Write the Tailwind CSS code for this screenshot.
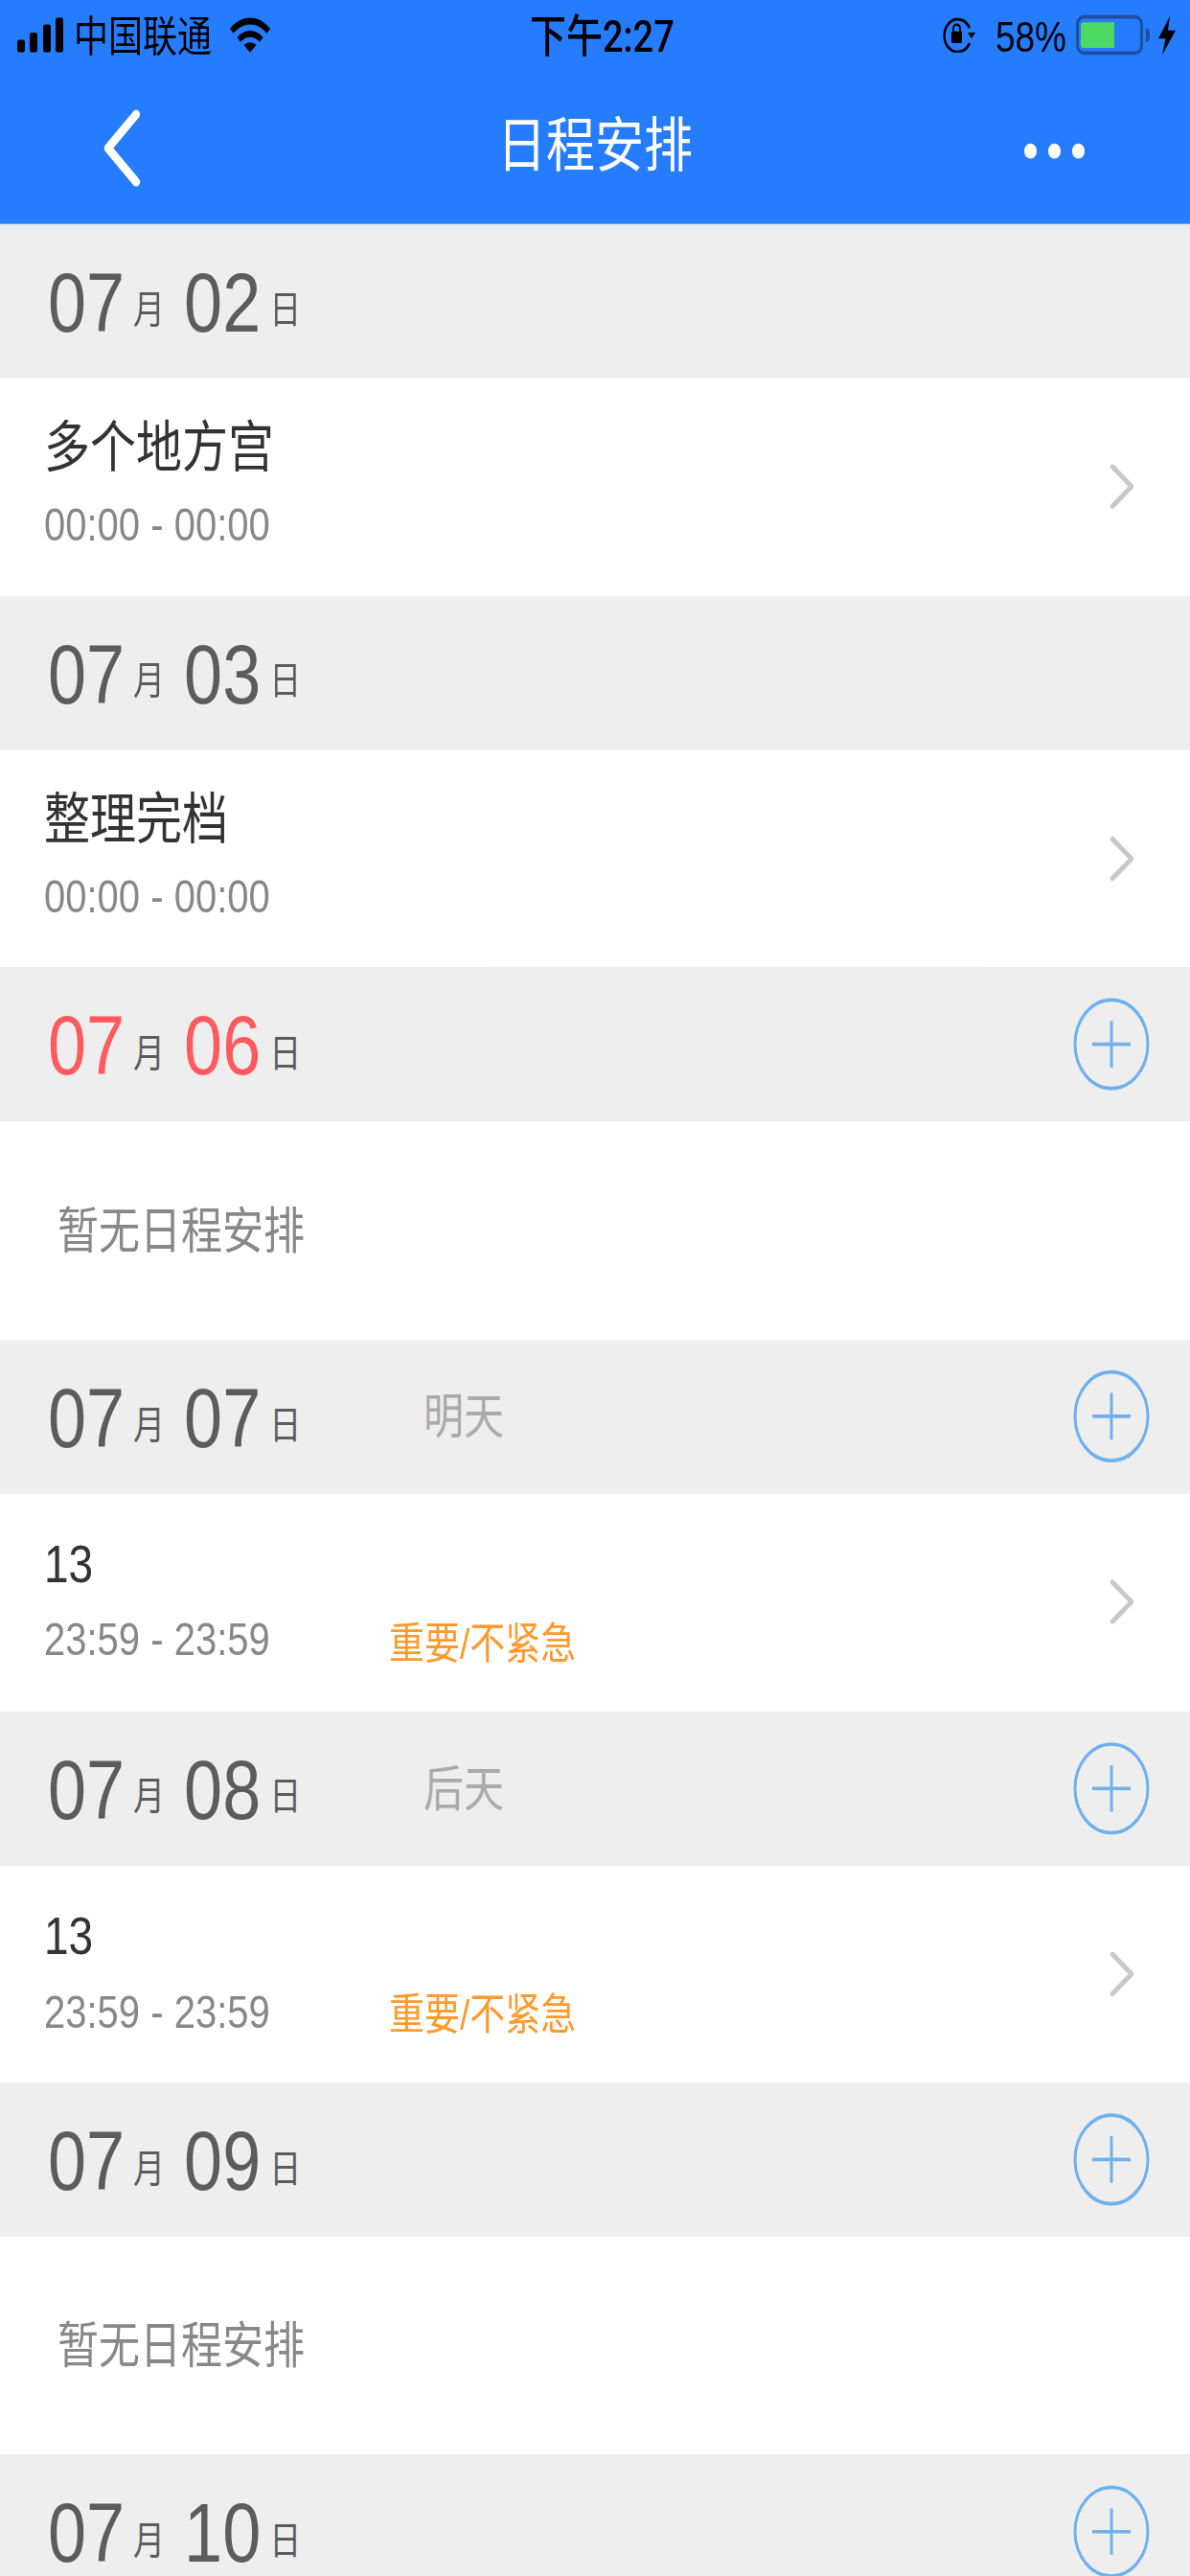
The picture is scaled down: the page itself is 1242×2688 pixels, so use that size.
<!DOCTYPE html>
<html lang="zh-CN">

<head>
  <meta charset="UTF-8">
  <meta name="viewport" content="width=device-width, initial-scale=1.0">
  <script src="https://cdn.jsdelivr.net/npm/@tailwindcss/browser@4"></script>
  <title>日程安排</title>
</head>

<body class="m-0 h-[2688px] w-[1242px] overflow-hidden bg-white">
  <!-- the screenshot is stretched vertically from 1242x2208, so lay out at that size and scale -->
  <div class="h-[2208px] w-[1242px] origin-top scale-y-[1.2174] font-['Liberation_Sans','Noto_Sans_CJK_SC',sans-serif]">

    <header class="h-[192px] bg-[#267cff] border-b border-[#1a86ff]">
      <!-- status bar -->
      <div class="relative flex h-[60px] items-center text-black">
        <svg class="ml-[18px] w-[48px] h-[30px]" viewBox="0 0 48 30" fill="#000">
          <rect x="0" y="19" width="8" height="11" rx="2.5" />
          <rect x="13" y="13" width="8" height="17" rx="2.5" />
          <rect x="27" y="6" width="8" height="24" rx="2.5" />
          <rect x="40" y="0" width="8" height="30" rx="2.5" />
        </svg>
        <span class="ml-[11px] mt-[3px] text-[36px] leading-none">中国联通</span>
        <svg class="ml-[19px] w-[42px] h-[30px]" viewBox="0 0 42 30" fill="#000">
          <path d="M0 9.5 C12 -3 30 -3 42 9.5 L38.5 13.5 C28 3.5 14 3.5 3.5 13.5 Z" />
          <path d="M7.5 17 C15 9.5 27 9.5 34.5 17 L31 21 C25 15.5 17 15.5 11 21 Z" />
          <path d="M14.5 23.5 C18.5 20.500 23.500 20.500 27.500 23.5 L21 30 Z" />
        </svg>
        <span class="absolute left-[553px] top-[12px] font-['Roboto','Noto_Sans_CJK_SC',sans-serif] text-[38px] leading-none font-medium">下午2:27</span>
        <div class="ml-auto flex items-center">
          <svg class="w-[34px] h-[30px]" viewBox="0 0 34 30" fill="none">
            <path d="M28 22 A14 14 0 1 1 28 9" stroke="#000" stroke-width="2.500" />
            <path d="M26 13 L34 13 L30 18 Z" fill="#000" />
            <rect x="9" y="12" width="11" height="10" rx="1" fill="#000" />
            <path d="M11 12 V9.500 A3.500 3.500 0 0 1 18 9.500 V12" stroke="#000" stroke-width="2" />
          </svg>
          <span class="ml-[21px] mt-[3px] text-[37px] leading-none">58%</span>
          <div class="ml-[10px] flex h-[34px] w-[70px] items-center rounded-[8px] border-[3px] border-[#1d4f9f] pl-[2px]">
            <div class="h-[22px] w-[35px] rounded-l-[3px] bg-[#4cd964]"></div>
          </div>
          <div class="ml-[3px] h-[12px] w-[4px] rounded-r-full bg-[#1d4f9f]"></div>
          <svg class="ml-[9px] mr-[15px] w-[18px] h-[33px]" viewBox="0 0 18 33" fill="#000">
            <path d="M12 0 L0 19 L7.500 19 L4 33 L18 12 L10 12 Z" />
          </svg>
        </div>
      </div>

      <!-- nav bar -->
      <div class="relative flex h-[131px] items-center justify-center">
        <svg class="absolute left-[106px] top-[34px] w-[42px] h-[66px]" viewBox="0 0 42 66" fill="none">
          <path d="M37 4 L6 33 L37 62" stroke="#fff" stroke-width="8" stroke-linecap="round" stroke-linejoin="round" transform="translate(1 0) scale(0.95 1)" />
        </svg>
        <h1 class="text-[51px] leading-none text-white">日程安排</h1>
        <div class="absolute left-[1069px] top-[63px] flex gap-[12px]">
          <span class="h-[13px] w-[13px] rounded-full bg-white"></span>
          <span class="h-[13px] w-[13px] rounded-full bg-white"></span>
          <span class="h-[13px] w-[13px] rounded-full bg-white"></span>
        </div>
      </div>
    </header>

    <main>
      <!-- 07/02 -->
      <section class="flex h-[132px] items-center bg-[#eeeeee] pl-[50px] pt-[2px] text-[#5c5c5c]">
        <span class="text-[72px] leading-none">07</span><span class="ml-[9px] mt-[12px] text-[33px] leading-none">月</span>
        <span class="ml-[20px] text-[72px] leading-none">02</span><span class="ml-[9px] mt-[12px] text-[33px] leading-none">日</span>
      </section>
      <article class="relative h-[186.700px] pl-[46px] pt-[30px]">
        <h2 class="text-[48px] leading-[60px] text-[#333]">多个地方宫</h2>
        <p class="mt-[11px] text-[40px] leading-[48px] text-[#888]">00:00 - 00:00</p>
        <svg class="absolute left-[1158px] top-[74px] w-[26px] h-[38px]" viewBox="0 0 26 38" fill="none">
          <path d="M3 2 L23 19 L3 36" stroke="#c8c8c8" stroke-width="4.500" stroke-linecap="round" stroke-linejoin="round" />
        </svg>
      </article>

      <!-- 07/03 -->
      <section class="flex h-[132px] items-center bg-[#eeeeee] pl-[50px] pt-[2px] text-[#5c5c5c]">
        <span class="text-[72px] leading-none">07</span><span class="ml-[9px] mt-[12px] text-[33px] leading-none">月</span>
        <span class="ml-[20px] text-[72px] leading-none">03</span><span class="ml-[9px] mt-[12px] text-[33px] leading-none">日</span>
      </section>
      <article class="relative h-[186.700px] pl-[46px] pt-[30px]">
        <h2 class="text-[48px] leading-[60px] text-[#333]">整理完档</h2>
        <p class="mt-[11px] text-[40px] leading-[48px] text-[#888]">00:00 - 00:00</p>
        <svg class="absolute left-[1158px] top-[74px] w-[26px] h-[38px]" viewBox="0 0 26 38" fill="none">
          <path d="M3 2 L23 19 L3 36" stroke="#c8c8c8" stroke-width="4.500" stroke-linecap="round" stroke-linejoin="round" />
        </svg>
      </article>

      <!-- 07/06 today -->
      <section class="relative flex h-[132px] items-center bg-[#eeeeee] pl-[50px] pt-[2px] text-[#5c5c5c]">
        <span class="text-[72px] leading-none text-[#ff5a60]">07</span><span class="ml-[9px] mt-[12px] text-[33px] leading-none">月</span>
        <span class="ml-[20px] text-[72px] leading-none text-[#ff5a60]">06</span><span class="ml-[9px] mt-[12px] text-[33px] leading-none">日</span>
        <svg class="absolute left-[1120px] top-[26px] w-[80px] h-[80px]" viewBox="0 0 80 80" fill="none" stroke="#6fb1ec" stroke-width="3">
          <circle cx="40" cy="40" r="38" />
          <path d="M20 40 H60 M40 20 V60" />
        </svg>
      </section>
      <article class="flex h-[186.700px] items-center pl-[60px] pt-[2px]">
        <p class="text-[43px] leading-none text-[#888]">暂无日程安排</p>
      </article>

      <!-- 07/07 -->
      <section class="relative flex h-[132px] items-center bg-[#eeeeee] pl-[50px] pt-[2px] text-[#5c5c5c]">
        <span class="text-[72px] leading-none">07</span><span class="ml-[9px] mt-[12px] text-[33px] leading-none">月</span>
        <span class="ml-[20px] text-[72px] leading-none">07</span><span class="ml-[9px] mt-[12px] text-[33px] leading-none">日</span>
        <span class="absolute left-[442px] text-[42px] leading-none text-[#aaa]">明天</span>
        <svg class="absolute left-[1120px] top-[26px] w-[80px] h-[80px]" viewBox="0 0 80 80" fill="none" stroke="#6fb1ec" stroke-width="3">
          <circle cx="40" cy="40" r="38" />
          <path d="M20 40 H60 M40 20 V60" />
        </svg>
      </section>
      <article class="relative h-[186.700px] pl-[46px] pt-[30px]">
        <h2 class="text-[46px] leading-[60px] text-[#333]">13</h2>
        <div class="mt-[11px] flex items-center">
          <p class="w-[360px] text-[40px] leading-[48px] text-[#888]">23:59 - 23:59</p>
          <span class="mt-[8px] text-[37px] leading-none text-[#ff9a2e]">重要/不紧急</span>
        </div>
        <svg class="absolute left-[1158px] top-[74px] w-[26px] h-[38px]" viewBox="0 0 26 38" fill="none">
          <path d="M3 2 L23 19 L3 36" stroke="#c8c8c8" stroke-width="4.500" stroke-linecap="round" stroke-linejoin="round" />
        </svg>
      </article>

      <!-- 07/08 -->
      <section class="relative flex h-[132px] items-center bg-[#eeeeee] pl-[50px] pt-[2px] text-[#5c5c5c]">
        <span class="text-[72px] leading-none">07</span><span class="ml-[9px] mt-[12px] text-[33px] leading-none">月</span>
        <span class="ml-[20px] text-[72px] leading-none">08</span><span class="ml-[9px] mt-[12px] text-[33px] leading-none">日</span>
        <span class="absolute left-[442px] text-[42px] leading-none text-[#aaa]">后天</span>
        <svg class="absolute left-[1120px] top-[26px] w-[80px] h-[80px]" viewBox="0 0 80 80" fill="none" stroke="#6fb1ec" stroke-width="3">
          <circle cx="40" cy="40" r="38" />
          <path d="M20 40 H60 M40 20 V60" />
        </svg>
      </section>
      <article class="relative h-[186.700px] pl-[46px] pt-[30px]">
        <h2 class="text-[46px] leading-[60px] text-[#333]">13</h2>
        <div class="mt-[11px] flex items-center">
          <p class="w-[360px] text-[40px] leading-[48px] text-[#888]">23:59 - 23:59</p>
          <span class="mt-[8px] text-[37px] leading-none text-[#ff9a2e]">重要/不紧急</span>
        </div>
        <svg class="absolute left-[1158px] top-[74px] w-[26px] h-[38px]" viewBox="0 0 26 38" fill="none">
          <path d="M3 2 L23 19 L3 36" stroke="#c8c8c8" stroke-width="4.500" stroke-linecap="round" stroke-linejoin="round" />
        </svg>
      </article>

      <!-- 07/09 -->
      <section class="relative flex h-[132px] items-center bg-[#eeeeee] pl-[50px] pt-[2px] text-[#5c5c5c]">
        <span class="text-[72px] leading-none">07</span><span class="ml-[9px] mt-[12px] text-[33px] leading-none">月</span>
        <span class="ml-[20px] text-[72px] leading-none">09</span><span class="ml-[9px] mt-[12px] text-[33px] leading-none">日</span>
        <svg class="absolute left-[1120px] top-[26px] w-[80px] h-[80px]" viewBox="0 0 80 80" fill="none" stroke="#6fb1ec" stroke-width="3">
          <circle cx="40" cy="40" r="38" />
          <path d="M20 40 H60 M40 20 V60" />
        </svg>
      </section>
      <article class="flex h-[186.700px] items-center pl-[60px] pt-[2px]">
        <p class="text-[43px] leading-none text-[#888]">暂无日程安排</p>
      </article>

      <!-- 07/10 -->
      <section class="relative flex h-[132px] items-center bg-[#eeeeee] pl-[50px] pt-[2px] text-[#5c5c5c]">
        <span class="text-[72px] leading-none">07</span><span class="ml-[9px] mt-[12px] text-[33px] leading-none">月</span>
        <span class="ml-[20px] text-[72px] leading-none">10</span><span class="ml-[9px] mt-[12px] text-[33px] leading-none">日</span>
        <svg class="absolute left-[1120px] top-[26px] w-[80px] h-[80px]" viewBox="0 0 80 80" fill="none" stroke="#6fb1ec" stroke-width="3">
          <circle cx="40" cy="40" r="38" />
          <path d="M20 40 H60 M40 20 V60" />
        </svg>
      </section>
    </main>
  </div>
</body>

</html>
